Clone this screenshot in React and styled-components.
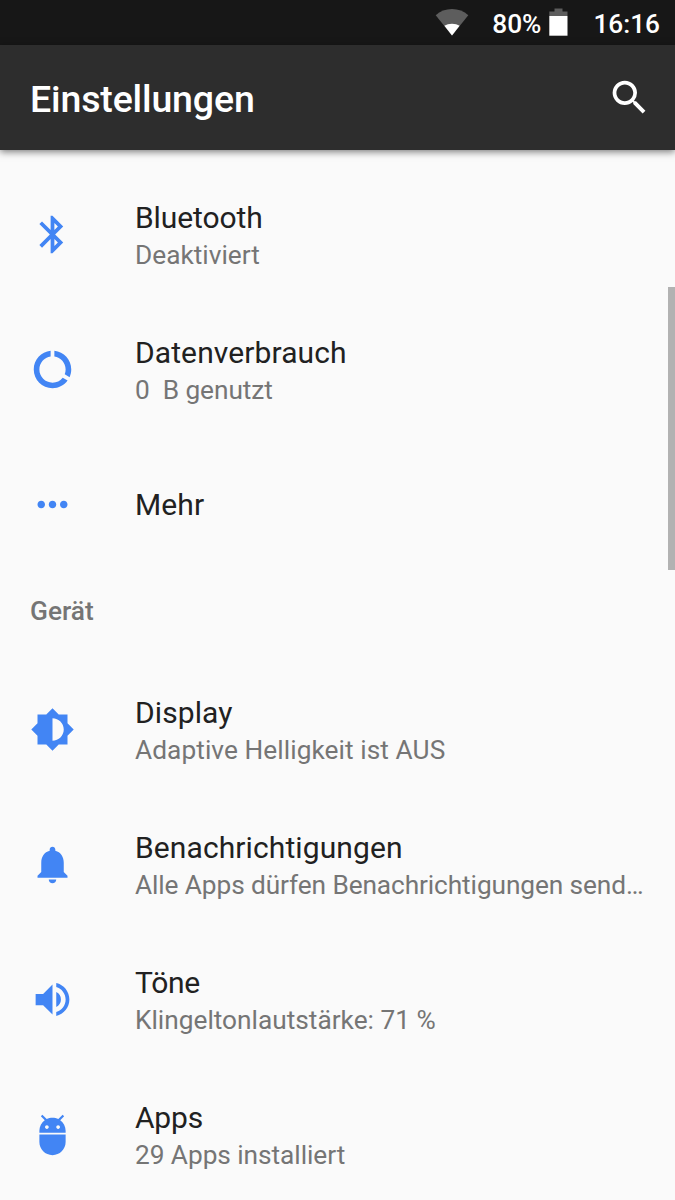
import React from 'react';
import styled, { createGlobalStyle } from 'styled-components';
import {
    MdSearch,
    MdBluetooth,
    MdDataUsage,
    MdMoreHoriz,
    MdBrightnessMedium,
    MdVolumeUp,
    MdAdb,
} from 'react-icons/md';

const GlobalStyle = createGlobalStyle`
* {
    box-sizing: border-box;
}

body {
    margin: 0;
    background: #fafafa;
    font-family: Roboto, sans-serif;
    overflow: hidden;
}
`

const Screen = styled.div`
    display: flex;
    flex-direction: column;
    position: relative;
    width: 675px;
    height: 1200px;
    overflow: hidden;
    background: #fafafa;
`

const StatusBar = styled.div`
    display: flex;
    flex: none;
    align-items: center;
    justify-content: flex-end;
    height: 45px;
    padding: 4px 15px 0 0;
    background: #171717;
    color: #fff;
    font-size: 26.25px;
    font-weight: 500;
    line-height: 41px;

    svg {
        display: block;
        margin-top: -5px;
    }
`

const BatteryLevel = styled.span`
    margin: 0 8px 0 23px;
`

const Clock = styled.span`
    margin-left: 25px;
`

const Toolbar = styled.header`
    display: flex;
    flex: none;
    align-items: center;
    justify-content: space-between;
    height: 105px;
    padding: 0 23px 0 30px;
    background: #2d2d2d;
    box-shadow: 0 2px 7px rgba(0, 0, 0, 0.5);
    color: #fff;
    z-index: 1;

    h1 {
        margin: 2px 0 0;
        font-size: 37.5px;
        font-weight: 500;
        letter-spacing: -0.15px;
        line-height: 44px;
    }

    svg {
        width: 45px;
        height: 45px;
        margin-top: -1px;
    }
`

const List = styled.main`
    padding-top: 17px;
`

const Category = styled.h2`
    height: 90px;
    margin: 0;
    padding: 0 30px;
    color: #757575;
    font-size: 26.25px;
    font-weight: 500;
    line-height: 78px;
`

const Row = styled.div`
    display: flex;
    align-items: center;
    height: 135px;
    padding: 0 30px;

    svg {
        flex: none;
        width: 45px;
        height: 45px;
        margin-right: 60px;
        color: #4285f4;
    }
`

const RowText = styled.div`
    min-width: 0;
    padding-top: ${props => props.$twoLine ? 4 : 1}px;
`

const Title = styled.div`
    color: #212121;
    font-size: 30px;
    letter-spacing: ${props => props.$spacing || 0}px;
    line-height: 38px;
`

const Summary = styled.div`
    color: #757575;
    font-size: 26.25px;
    letter-spacing: ${props => props.$spacing || 0}px;
    line-height: 37px;
    white-space: pre;
`

const Scrollbar = styled.div`
    position: absolute;
    top: 287px;
    right: 0;
    width: 7.5px;
    height: 283px;
    background: #b2b2b2;
`

function WifiIcon() {
    return (
        <svg width="34" height="28" viewBox="0 0 34 28">
            <path d="M17 27.5L.7 7.2C5.1 3 10.7 1 17 1s11.9 2 16.3 6.2z" fill="#5d5d5d" />
            <path d="M17 27.5L9.4 17.8C11.5 16.4 14 15.7 17 15.7s5.5.7 7.6 2.1z" fill="#fff" />
        </svg>
    );
}

function BatteryIcon() {
    return (
        <svg width="19" height="28" viewBox="0 0 19 28">
            <path d="M5.5.5h8v3h5V8H.3V3.5h5.2z" fill="#5d5d5d" />
            <path d="M.3 8h18.2v19.7H.3z" fill="#fff" />
        </svg>
    );
}

function BellIcon() {
    return (
        <svg viewBox="0 0 24 24" fill="currentColor">
            <path d="M12 22c1.1 0 2-.9 2-2h-4c0 1.1.89 2 2 2zm6-6v-5c0-3.07-1.64-5.64-4.5-6.32V4c0-.83-.67-1.5-1.5-1.5s-1.5.67-1.5 1.5v.68C7.63 5.36 6 7.92 6 11v5l-2 2v1h16v-1l-2-2z" />
        </svg>
    );
}

function Setting(props) {
    return (
        <Row>
            {props.icon}
            <RowText $twoLine={!!props.summary}>
                <Title $spacing={props.titleSpacing}>{props.title}</Title>
                {props.summary && <Summary $spacing={props.summarySpacing}>{props.summary}</Summary>}
            </RowText>
        </Row>
    );
}

function App() {
    return (
        <Screen>
            <GlobalStyle />
            <StatusBar>
                <WifiIcon />
                <BatteryLevel>80%</BatteryLevel>
                <BatteryIcon />
                <Clock>16:16</Clock>
            </StatusBar>
            <Toolbar>
                <h1>Einstellungen</h1>
                <MdSearch />
            </Toolbar>
            <List>
                <Setting icon={<MdBluetooth />} title="Bluetooth" titleSpacing={-0.1} summary="Deaktiviert" />
                <Setting icon={<MdDataUsage />} title="Datenverbrauch" titleSpacing={0.1} summary="0  B genutzt" summarySpacing={-0.05} />
                <Setting icon={<MdMoreHoriz />} title="Mehr" titleSpacing={0.1} />
                <Category>Gerät</Category>
                <Setting icon={<MdBrightnessMedium />} title="Display" titleSpacing={0.1} summary="Adaptive Helligkeit ist AUS" summarySpacing={0.07} />
                <Setting icon={<BellIcon />} title="Benachrichtigungen" titleSpacing={0.1} summary="Alle Apps dürfen Benachrichtigungen send…" summarySpacing={-0.1} />
                <Setting icon={<MdVolumeUp />} title="Töne" titleSpacing={-0.3} summary="Klingeltonlautstärke: 71 %" />
                <Setting icon={<MdAdb />} title="Apps" titleSpacing={-0.2} summary="29 Apps installiert" summarySpacing={-0.05} />
            </List>
            <Scrollbar />
        </Screen>
    );
}

export default App;
